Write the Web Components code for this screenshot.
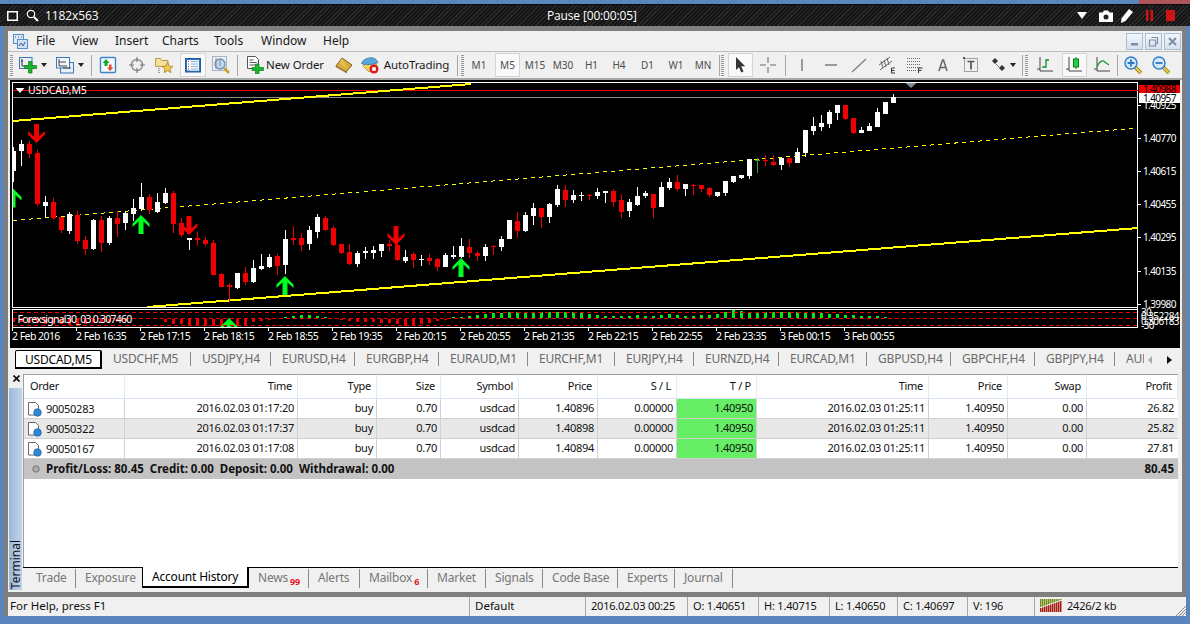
<!DOCTYPE html>
<html>
<head>
<meta charset="utf-8">
<title>MetaTrader</title>
<style>
  html, body { margin: 0; padding: 0; width: 1190px; height: 624px; overflow: hidden; background: #5a86bd; }
  body { font-family: "Noto Sans", "Liberation Sans", sans-serif; }
</style>
</head>
<body>
<mt-app></mt-app>
<script>
// toolbar and menu icons, all drawn on an 18px box
const ICON = {
  newChart: `<svg width="18" height="18" viewBox="0 0 18 18"><rect x=".5" y="1.5" width="12.500" height="11" fill="#e8f0fa" stroke="#3f74b5"/><path d="M3 3v7h7M2 5h2M8 9v2" stroke="#333" fill="none"/><path d="M5.500 9.500h4v-4h3.500v4h4.500v3H13v4.500H9.500v-4.500h-4z" fill="#19b52d" stroke="#0d7a1c" stroke-width=".7"/></svg>`,
  profiles: `<svg width="18" height="18" viewBox="0 0 18 18"><rect x="4.5" y="6.5" width="13" height="10.5" fill="#e8f0fa" stroke="#3f74b5"/><rect x=".5" y="1.5" width="13" height="10.5" fill="#f1f6fc" stroke="#3f74b5"/><path d="M3 3v7h8M3 6h7M7 12h8" stroke="#444" fill="none"/></svg>`,
  market: `<svg width="18" height="18" viewBox="0 0 18 18"><rect x="1.5" y="1.5" width="15" height="15" rx="1" fill="#f6faff" stroke="#3f84c5" stroke-width="1.4"/><path d="M7 3l3.5 4H8.5v3h-3V7H3.500z" fill="#14a82a"/><path d="M11 15l-3-3.500h2V8.500h2.500v3h2z" fill="#e2502a"/></svg>`,
  nav: `<svg width="18" height="18" viewBox="0 0 18 18"><circle cx="9" cy="9" r="5.500" fill="none" stroke="#8a8a8a" stroke-width="1.400"/><path d="M9 1v5M9 12v5M1 9h5M12 9h5" stroke="#777" stroke-width="1.100"/></svg>`,
  folder: `<svg width="18" height="18" viewBox="0 0 18 18"><path d="M.5 2.500h5l1.500 2h6v6H.5z" fill="#f6df9a" stroke="#b89a4b"/><path d="M4 12v5M2 14h.1" stroke="#555" stroke-dasharray="1 1"/><path d="M12.500 6.500l1.700 3.500 3.600.5-2.600 2.500.7 3.600-3.400-1.800-3.300 1.800.7-3.600-2.700-2.500 3.700-.5z" fill="#eec84f" stroke="#a6852c" stroke-width=".8"/></svg>`,
  terminal: `<svg width="18" height="18" viewBox="0 0 18 18"><rect x="1.500" y="2.500" width="15" height="13.500" fill="#2f73bb" stroke="#235d9d"/><rect x="3" y="4" width="12" height="10.500" fill="#fff"/><rect x="6" y="4" width="9" height="10.500" fill="#eaf2fb"/><path d="M4 5.500h1M4 8h1M4 10.500h1M4 13h1" stroke="#b33"/><path d="M7 5.500h7M7 8h7M7 10.500h7M7 13h7" stroke="#9bbbdd"/></svg>`,
  tester: `<svg width="18" height="18" viewBox="0 0 18 18"><rect x=".5" y=".5" width="14" height="14" fill="#eef2f6" stroke="#aab4bf"/><circle cx="8" cy="8" r="5" fill="#bcd8f2" stroke="#6d8fb2" stroke-width="1.300"/><path d="M4 2v11M8 4v6" stroke="#888"/><path d="M12 12l5 5" stroke="#c9a030" stroke-width="2.500"/></svg>`,
  order: `<svg width="18" height="18" viewBox="0 0 18 18"><path d="M1.500.5h8l3 3v9h-11z" fill="#fff" stroke="#555"/><path d="M3.500 4h4M3.500 6.500h7M3.500 9h7" stroke="#555"/><path d="M6 11.500h3.500V8h3.500v3.500h4.500v3H13V18H9.500v-3.500H6z" fill="#19b52d" stroke="#0d7a1c" stroke-width=".7"/></svg>`,
  book: `<svg width="18" height="18" viewBox="0 0 18 18"><path d="M7 2l10 7-6 7-10-6z" fill="#d9ad3c" stroke="#7d5a16"/><path d="M1 10l10 6 .8 1L1 11z" fill="#f7edc9" stroke="#7d5a16" stroke-width=".6"/><path d="M7 2L4 7l9 6" fill="#ecc862" opacity=".6"/></svg>`,
  auto: `<svg width="18" height="18" viewBox="0 0 18 18"><path d="M2 10l6 6 8-5-1-4H3z" fill="#f2d15f" stroke="#a78a2b" stroke-width=".7"/><path d="M.5 7.500C2 2 12 0 15 3.500l2 3c-3 2-12 3-16.500 1z" fill="#5aa6db" stroke="#2c6d9f" stroke-width=".7"/><circle cx="13" cy="13" r="4.500" fill="#d91c1c"/><rect x="11.200" y="11.200" width="3.600" height="3.600" fill="#fff"/></svg>`,
  cursor: `<svg width="18" height="18" viewBox="0 0 18 18"><path d="M5 1v13l3-2.700 2.300 5.200 2.200-1-2.300-5.200h4z" fill="#333"/></svg>`,
  cross: `<svg width="18" height="18" viewBox="0 0 18 18"><path d="M1 9h6M11 9h6M9 1v6M9 11v6" stroke="#666"/></svg>`,
  vline: `<svg width="18" height="18" viewBox="0 0 18 18"><path d="M9 3v12" stroke="#555" stroke-width="1.100"/></svg>`,
  hline: `<svg width="18" height="18" viewBox="0 0 18 18"><path d="M3 9h12" stroke="#555" stroke-width="1.100"/></svg>`,
  tline: `<svg width="18" height="18" viewBox="0 0 18 18"><path d="M2 16L16 3" stroke="#777" stroke-width="1.100"/></svg>`,
  chan: `<svg width="18" height="18" viewBox="0 0 18 18"><path d="M1 9L12 1M2 14L14 5M3 5l2 7M6 4l2 7M9 2l2 7" stroke="#666" fill="none"/><path d="M13.500 17v-5h3.500M13.500 14.500h3M13.500 17h3.500" stroke="#333" fill="none"/></svg>`,
  fibo: `<svg width="18" height="18" viewBox="0 0 18 18"><path d="M1 2.500h14M1 5.500h14M1 8.500h14M1 11.500h14M1 14.500h9" stroke="#666" stroke-dasharray="1 1"/><path d="M12.500 17v-5h4M12.500 14.500h3" stroke="#333" fill="none"/></svg>`,
  letter: `<svg width="18" height="18" viewBox="0 0 18 18"><path d="M5 15L8.500 4h1L13 15M6.500 11.500h5" stroke="#666" stroke-width="1.500" fill="none"/></svg>`,
  label: `<svg width="18" height="18" viewBox="0 0 18 18"><rect x="2.500" y="2.500" width="13" height="13" fill="none" stroke="#555" stroke-dasharray="1 1"/><path d="M5.500 5.500h7M9 5.500v8" stroke="#555" stroke-width="1.700"/><rect x="1" y="1" width="2" height="2" fill="#555"/></svg>`,
  shapes: `<svg width="18" height="18" viewBox="0 0 18 18"><path d="M6 2l3 3-3 3-3-3z" fill="#333"/><path d="M13 9l3 3-3 3-3-3z" fill="#333"/><path d="M7 8l4 4" stroke="#777"/></svg>`,
  bars: `<svg width="18" height="18" viewBox="0 0 18 18"><path d="M4 1v14h13M1 13h3" stroke="#444" fill="none"/><path d="M7 12v-1h3V4h3" stroke="#0c8f22" stroke-width="1.300" fill="none"/></svg>`,
  candles: `<svg width="18" height="18" viewBox="0 0 18 18"><path d="M4 1v14h13M1 13h3" stroke="#444" fill="none"/><path d="M11 1v12" stroke="#0b7a1c"/><rect x="8.500" y="3" width="5" height="8" fill="#1fd43a" stroke="#0b7a1c"/></svg>`,
  line: `<svg width="18" height="18" viewBox="0 0 18 18"><path d="M4 1v14h13M1 13h3" stroke="#444" fill="none"/><path d="M4 11c3-7 6-7 8-5l4 3" stroke="#1a9a30" stroke-width="1.200" fill="none"/></svg>`,
  zoomIn: `<svg width="18" height="18" viewBox="0 0 18 18"><path d="M11 11l6 6" stroke="#8a6a10" stroke-width="3.600"/><path d="M11 11l6 6" stroke="#f0d04a" stroke-width="2"/><circle cx="7" cy="7" r="6" fill="#d6e8f8" stroke="#3380c8" stroke-width="1.500"/><path d="M3.500 7h7M7 3.500v7" stroke="#2a78c0" stroke-width="1.800"/></svg>`,
  zoomOut: `<svg width="18" height="18" viewBox="0 0 18 18"><path d="M11 11l6 6" stroke="#8a6a10" stroke-width="3.600"/><path d="M11 11l6 6" stroke="#f0d04a" stroke-width="2"/><circle cx="7" cy="7" r="6" fill="#d6e8f8" stroke="#3380c8" stroke-width="1.500"/><path d="M3.500 7h7" stroke="#2a78c0" stroke-width="1.800"/></svg>`
};

// base class: every element just stamps a style + markup into an open shadow root
class MtElement extends HTMLElement {
  constructor() {
    super();
    this.attachShadow({ mode: 'open' });
  }
  connectedCallback() {
    this.shadowRoot.innerHTML = `<style>${this.css()}</style>${this.html()}`;
  }
}

class MtTitlebar extends MtElement {
  css() {
    return `
      :host { display: flex; align-items: center; height: 22px; color: #fff; font: 12px "Open Sans", sans-serif; position: relative;
        background: repeating-linear-gradient(135deg, #2b2b2b 0 1px, #151515 1px 3px); border-top: 1px solid #0a0a0a; box-sizing: border-box; }
      .left { display: flex; align-items: center; margin-left: 7px; }
      .size { margin-left: 6px; letter-spacing: -.1px; }
      .mid { position: absolute; left: 547px; top: 2px; letter-spacing: -.15px; }
      .right { margin-left: auto; display: flex; align-items: center; }
      svg { display: block; }
    `;
  }
  html() {
    return `
      <div class="left">
        <svg width="11" height="10" viewBox="0 0 11 10" style="margin-right:8px"><rect x=".75" y=".75" width="9.500" height="8.500" fill="none" stroke="#fff" stroke-width="1.500"/></svg>
        <svg width="13" height="13" viewBox="0 0 13 13"><circle cx="5" cy="5" r="3.700" fill="none" stroke="#fff" stroke-width="1.200"/><path d="M8 8l4 4" stroke="#fff" stroke-width="2"/></svg>
        <span class="size">1182x563</span>
      </div>
      <span class="mid">Pause [00:00:05]</span>
      <div class="right">
        <svg width="10" height="7" viewBox="0 0 10 7" style="margin-right:12px"><path d="M0 0h10L5 7z" fill="#fff"/></svg>
        <svg width="14" height="12" viewBox="0 0 14 12" style="margin-right:7px"><path d="M0 2.500h3.500L5 .5h4l1.500 2H14V12H0z" fill="#fff"/><circle cx="7" cy="7" r="2.500" fill="#222"/></svg>
        <svg width="13" height="14" viewBox="0 0 13 14" style="margin-right:13px"><path d="M9 0l4 3-7.500 9L1 14l.5-4.500z" fill="#fff"/></svg>
        <svg width="7" height="11" viewBox="0 0 7 11" style="margin-right:13px"><path d="M0 0h2.500v11H0zM4.500 0H7v11H4.500z" fill="#d01414"/></svg>
        <svg width="9" height="11" viewBox="0 0 9 11" style="margin-right:15px"><rect width="9" height="11" fill="#d01414"/></svg>
      </div>`;
  }
}

class MtMenubar extends MtElement {
  css() {
    return `
      :host { display: flex; align-items: center; height: 20px; font: 12px "Noto Sans", sans-serif; color: #1a1a1a; border-bottom: 1px solid #bdbdbd; }
      svg { margin: 0 8px 0 5px; flex: none; }
      span { display: block; white-space: nowrap; padding-bottom: 1px; }
      .mdi { margin-left: auto; display: flex; gap: 2px; margin-right: 1px; }
      .mdi b { width: 15px; height: 15px; border: 1px solid #a9bcd0; background: linear-gradient(#f2f7fc, #d3e1ef); color: #7b8ea3; display: flex; align-items: center; justify-content: center; }
      .mdi svg { margin: 0; }
    `;
  }
  html() {
    const items = [['File', 36], ['View', 43], ['Insert', 47], ['Charts', 52], ['Tools', 47], ['Window', 62], ['Help', 40]];
    return `
      <svg width="15" height="15" viewBox="0 0 15 15"><rect x=".5" y=".5" width="10" height="9" fill="#dce9f7" stroke="#5a8cc4"/><rect x="4.500" y="5.500" width="10" height="9" fill="#cfe0f3" stroke="#5a8cc4"/><path d="M6 12l2-3 2 3 2-4" stroke="#355f92" fill="none"/><path d="M2 3h1M5 3h1M8 3h1" stroke="#355f92"/></svg>
      ${items.map(([t, w]) => `<span style="width:${w}px">${t}</span>`).join('')}
      <div class="mdi">
        <b><svg width="9" height="9" viewBox="0 0 9 9"><rect x="1" y="6" width="7" height="2.500" fill="#7b8ea3"/></svg></b>
        <b><svg width="11" height="11" viewBox="0 0 11 11"><path d="M3.500 1.500h6v6h-2M1.500 4h6v6h-6z" fill="none" stroke="#7b8ea3" stroke-width="1.200"/></svg></b>
        <b><svg width="9" height="9" viewBox="0 0 9 9"><path d="M1 1l7 7M8 1L1 8" stroke="#7b8ea3" stroke-width="2"/></svg></b>
      </div>`;
  }
}

class MtToolbar extends MtElement {
  css() {
    return `
      :host { display: flex; align-items: center; height: 28px; border-bottom: 2px solid #a8a8a8; box-sizing: border-box; font: 11.500px "Noto Sans", sans-serif; letter-spacing: -.1px; color: #1a1a1a; }
      .i { flex: none; display: flex; align-items: center; justify-content: center; white-space: nowrap; }
      .txt { padding-bottom: 2px; }
      .grip { height: 21px; background: repeating-linear-gradient(#9a9a9a 0 1px, transparent 1px 2px); }
      .sep { height: 21px; background: #a6a6a6; }
      .on { height: 24px; box-sizing: border-box; border: 1px solid #d4d4d4; background: repeating-conic-gradient(#fff 0 25%, #f3f3f3 0 50%) 0 0 / 2px 2px; }
      .tf { color: #4d4d4d; font-size: 10px; letter-spacing: 0; }
      .arrow { width: 0; height: 0; border: 3px solid transparent; border-top: 4px solid #222; border-bottom: 0; }
    `;
  }
  html() {
    // center x on the page, width, content
    const I = ICON;
    const list = [
      [11.5, 3, 'grip'], [27.5, 18, I.newChart], [44, 6, 'arrow'], [65, 18, I.profiles], [80.5, 6, 'arrow'], [91.5, 1, 'sep'],
      [108, 18, I.market], [136.5, 18, I.nav], [164, 18, I.folder], [193, 26, I.terminal, 1], [221, 18, I.tester], [237.5, 1, 'sep'],
      [255, 18, I.order], [295, 58, 'New Order'], [343.5, 18, I.book], [370, 18, I.auto], [416.5, 68, 'AutoTrading'], [457.5, 1, 'sep'], [462.5, 3, 'grip'],
      [479, 20, 'M1', 0, 1], [507.5, 25, 'M5', 1, 1], [535, 24, 'M15', 0, 1], [563, 24, 'M30', 0, 1], [591.5, 20, 'H1', 0, 1], [619, 20, 'H4', 0, 1], [647.5, 20, 'D1', 0, 1], [676, 20, 'W1', 0, 1], [703, 22, 'MN', 0, 1],
      [719, 1, 'sep'], [722.5, 3, 'grip'],
      [740, 25, I.cursor, 1], [768, 18, I.cross], [785.5, 1, 'sep'], [802, 18, I.vline], [830.5, 18, I.hline], [858.5, 18, I.tline], [887, 18, I.chan], [915, 18, I.fibo], [943, 18, I.letter], [971, 18, I.label], [998, 18, I.shapes], [1013, 6, 'arrow'],
      [1022.5, 1, 'sep'], [1026.5, 3, 'grip'], [1045, 18, I.bars], [1074, 25, I.candles, 1], [1102, 18, I.line], [1117.5, 1, 'sep'], [1133, 18, I.zoomIn], [1161, 18, I.zoomOut]
    ];
    let end = 8;
    return list.map(([c, w, what, on, tf]) => {
      const ml = c - w / 2 - end;
      end = c + w / 2;
      const plain = what === 'New Order' || what === 'AutoTrading';
      const cls = ['i', on ? 'on' : '', tf ? 'tf' : '', plain ? 'txt' : '', what === 'grip' || what === 'sep' ? what : ''].join(' ');
      const body = what === 'grip' || what === 'sep' ? '' : what === 'arrow' ? '<span class="arrow"></span>' : what;
      return `<div class="${cls}" style="width:${w}px;margin-left:${ml}px">${body}</div>`;
    }).join('');
  }
}

// candles are read off the reference: colour, wick top, body top, body bottom, wick bottom
// values are 3x offsets from y=110
const CANDLES = `W 112 124 183 215|W 90 102 122 168|R 94 102 132 143|R 120 129 282 287|W 258 276 288 323|R 264 276 323 330|R 320 320 359 368|W 306 312 363 372|R 303 315 392 401|R 378 390 417 435|W 327 330 417 420|R 318 330 399 426|W 318 324 399 405|R 303 324 342 381|W 303 309 339 360|W 267 294 312 333|W 219 261 297 303|R 252 261 300 312|W 249 276 306 309|W 234 249 279 282|R 243 249 342 369|R 324 339 375 381|W 384 384 391 420|R 366 384 389 408|R 381 390 402 408|R 390 399 495 495|R 489 492 531 531|R 519 525 530 575|W 489 489 534 537|R 471 489 516 525|W 450 474 516 519|W 432 468 477 480|W 432 441 471 474|R 432 438 468 495|W 360 387 465 492|R 348 384 389 405|R 369 384 405 423|W 348 360 402 420|W 312 321 366 384|R 318 324 360 363|R 348 354 405 408|R 402 402 429 432|R 402 426 462 465|W 423 429 462 471|W 411 423 428 447|W 408 420 429 447|W 402 402 423 441|R 390 402 407 423|R 348 405 450 453|W 420 441 453 459|R 426 432 450 474|W 435 447 450 468|R 432 444 453 465|R 444 447 471 483|W 429 435 471 471|W 408 435 441 447|W 384 408 441 444|R 387 411 429 444|R 423 429 438 453|W 402 411 438 453|R 405 408 411 435|W 378 387 411 423|W 330 330 387 387|R 306 333 363 384|W 306 315 363 366|W 279 294 318 345|R 294 294 321 354|W 279 282 321 339|W 225 237 285 291|R 225 240 270 291|W 240 255 270 279|W 246 255 258 273|R 252 255 258 270|W 234 246 258 267|W 243 243 248 279|R 237 243 276 291|R 252 270 306 324|W 267 276 303 321|W 231 258 285 288|W 243 249 258 264|R 252 252 294 324|W 216 231 291 291|W 204 216 234 240|R 195 216 237 243|W 222 222 237 258|R 222 225 228 255|R 225 225 237 246|R 231 234 255 261|W 246 246 258 261|W 213 213 249 258|W 198 198 216 219|W 195 195 204 207|W 147 147 198 207|G 144 150 153 189|R 135 150 153 168|R 135 156 165 168|W 141 144 165 180|R 144 144 159 171|W 114 126 159 159|W 60 60 130 142|W 21 48 63 75|W 15 39 51 63|W 0 6 42 54|W -15 -15 9 30|R -15 -15 27 30|R 24 24 69 72|W 51 60 69 69|W 39 48 63 63|W -6 6 51 51|W -24 -24 12 12|W -48 -39 -21 -21`
  .split('|').map(s => s.split(' '));

// oscillator in the sub window, one value per candle, + is green up, - is red down
const OSC = [-3,-3,-4,-4,-5,-5,-5,-6,-6,-5,-4,-4,-3,-3,-2,.5,.5,.5,.5,-3,-5,-5,-6,-7,-7,-7,-7,-7,-7,-6,-3,-2,-1,.5,1,2,3,3,2,1,.5,-1,-2,-3,-3,-3,-4,-4,-5,-7,-6,-5,-4,-2,-.5,1,1,2,3,4,5,5,6,6,6,6,6,6,6,6,6,5,4,3,2,2,2,2,3,2,2,3,4,3,2,2,3,3,4,6,8,7,6,6,6,6,6,6,6,6,6,5,4,4,3,3,2,2,2,1,.5];

class MtChart extends MtElement {
  css() {
    return `
      :host { display: block; height: 268px; margin: 0 2px; background: #000; }
      svg { display: block; font: 10.500px "Noto Sans", sans-serif; }
      text { fill: #fff; }
      .c { shape-rendering: crispEdges; }
      .d { letter-spacing: -.55px; }
      .p { font-size: 10px; letter-spacing: -.6px; }
    `;
  }
  html() {
    const y = v => Math.round(110 + v / 3);
    const col = { W: '#fff', R: '#f00000', G: '#3aa03a' };
    const candles = CANDLES.map(([c, wt, bt, bb, wb], i) => {
      const x = 13 + 8 * i;
      const h = Math.max(1, y(+bb) - y(+bt));
      return `<rect x="${x}" y="${y(+wt)}" width="1" height="${Math.max(1, y(+wb) - y(+wt))}" fill="${col[c]}"/>` +
        `<rect x="${x - 2}" y="${y(+bt)}" width="5" height="${h}" fill="${col[c]}"/>`;
    }).join('');
    const osc = OSC.map((v, i) => {
      const x = 12 + 8 * i, h = Math.abs(v);
      if (v > 0) return `<rect x="${x}" y="${318 - h}" width="3" height="${h}" fill="#00e81c"/>`;
      return `<rect x="${x}" y="319" width="3" height="${h}" fill="#f00000"/>`;
    }).join('');
    const up = (x, t, col) => `<path transform="translate(${x} ${t})" d="M0 0L8.500 8.500V12L2.500 6.500V19H-2.500V6.500L-8.500 12V8.500z" fill="${col}"/>`;
    const down = (x, t) => `<path transform="translate(${x} ${t}) scale(1 -1)" d="M0 0L8.500 8.500V12L2.500 6.500V19H-2.500V6.500L-8.500 12V8.500z" fill="#f00000"/>`;
    const prices = [['1.40925', 105], ['1.40770', 138], ['1.40615', 171], ['1.40455', 204], ['1.40295', 237], ['1.40135', 271], ['1.39980', 304]];
    const dates = ['2 Feb 2016', '2 Feb 16:35', '2 Feb 17:15', '2 Feb 18:15', '2 Feb 18:55', '2 Feb 19:35', '2 Feb 20:15', '2 Feb 20:55', '2 Feb 21:35', '2 Feb 22:15', '2 Feb 22:55', '2 Feb 23:35', '3 Feb 00:15', '3 Feb 00:55'];
    return `
    <svg width="1170" height="268" viewBox="10 80 1170 268">
      <defs>
        <clipPath id="main"><rect x="13" y="83" width="1125" height="224"/></clipPath>
        <clipPath id="sub"><rect x="13" y="310" width="1125" height="17"/></clipPath>
      </defs>
      <g class="c" fill="none" stroke="#fff">
        <rect x="12.500" y="82.500" width="1125" height="225"/>
        <rect x="12.500" y="309.500" width="1125" height="18"/>
        <path d="M1137.500 82v245"/>
      </g>
      <g clip-path="url(#main)">
        <path class="c" d="M13 97.500H1138" stroke="#8a8a8a"/>
        <path class="c" d="M13 90.500H1138" stroke="#f00000"/>
        <path d="M15.500 88h9l-4.500 5z" fill="#fff"/>
        <text x="28" y="94" style="letter-spacing:-.15px">USDCAD,M5</text>
        <path class="c" d="M13 121L471 84" stroke="#ffff00" stroke-width="2"/>
        <path class="c" d="M147 307L1138 228" stroke="#ffff00" stroke-width="2"/>
        <path class="c" d="M13 220.500L1138 128" stroke="#ffff00" stroke-dasharray="4 4"/>
        <g class="c">${candles}</g>
        ${up(13, 188.5, '#00ff1e')}${up(141, 215, '#00ff1e')}${up(285, 276, '#00ff1e')}${up(461, 258, '#00ff1e')}
        ${down(36.5, 143)}${down(189, 235)}${down(396, 245)}
        <path d="M905.500 83h11l-5.500 5z" fill="#7f8c99"/>
      </g>
      <g clip-path="url(#sub)">
        <g class="c">${osc}</g>
        ${up(229, 318, '#00ff1e')}
        <g class="c" stroke="#f00000" stroke-dasharray="4 3">
          <path d="M13 312.500H1138M13 318.500H1138M13 325.500H1138"/>
        </g>
        <text x="17.500" y="323" style="letter-spacing:-.75px">Forexsignal30_03 0.307460</text>
      </g>
      <rect x="1139" y="85" width="41" height="8" fill="#f00000"/>
      <text class="p" x="1143" y="93" style="fill:#000">1.40988</text>
      ${prices.map(([t, py]) => `<path class="c" d="M1138 ${py + .5}h3" stroke="#fff"/><text class="p" x="1143" y="${py + 4}">${t}</text>`).join('')}
      <rect x="1139" y="93" width="41" height="10" fill="#fff"/>
      <text class="p" x="1143" y="102" style="fill:#000">1.40957</text>
      <g>
        <text class="p" x="1141" y="315.500">30</text>
        <text class="p" x="1141" y="320">0.352284</text>
        <text class="p" x="1141" y="324.500">0.306183</text>
        <text class="p" x="1141" y="329">-30</text>
      </g>
      ${dates.map((d, i) => {
        const x = 12 + 64 * i;
        return `<path class="c" d="M${x + .5} 327v4" stroke="#fff"/><text class="d" x="${x}" y="340">${d}</text>`;
      }).join('')}
    </svg>`;
  }
}

class MtChartTabs extends MtElement {
  css() {
    return `
      :host { display: flex; height: 19px; margin-top: 2px; font: 12px "Noto Sans", sans-serif; letter-spacing: -.2px; color: #6a6a6a; position: relative; }
      .strip { display: flex; margin-left: 7px; width: 1129px; overflow: hidden; flex: none; }
      .t { flex: none; box-sizing: border-box; white-space: nowrap; padding-left: 11px; line-height: 18px; position: relative; }
      .t::after { content: ""; position: absolute; right: 0; top: 2px; height: 14px; width: 1px; background: #888; }
      .t:last-child::after { display: none; }
      .on { padding-left: 9px; color: #000; border: 1px solid #000; border-bottom-width: 2px; border-right-width: 2px; border-radius: 2px 2px 0 0; background: #fff; height: 19px; line-height: 17px; }
      .on::after { display: none; }
      .arr { display: flex; align-items: center; margin-left: 4px; }
      .l { border: 4px solid transparent; border-left: 0; border-right: 4px solid #aaa; }
      .r { border: 4px solid transparent; border-right: 0; border-left: 5px solid #111; margin-left: 15px; }
    `;
  }
  html() {
    const tabs = [['USDCHF,M5', 190], ['USDJPY,H4', 270], ['EURUSD,H4', 354], ['EURGBP,H4', 438], ['EURAUD,M1', 527], ['EURCHF,M1', 614], ['EURJPY,H4', 693], ['EURNZD,H4', 778], ['EURCAD,M1', 866], ['GBPUSD,H4', 950], ['GBPCHF,H4', 1034], ['GBPJPY,H4', 1114], ['AUDCAD,H4', 1200]];
    let end = 102;
    return `<div class="strip"><div class="t on" style="width:87px">USDCAD,M5</div>
      ${tabs.map(([t, r]) => { const w = r + 1 - end; end = r + 1; return `<div class="t" style="width:${w}px">${t}</div>`; }).join('')}
      </div><div class="arr"><span class="l"></span><span class="r"></span></div>`;
  }
}

class MtTable extends MtElement {
  css() {
    return `
      :host { display: block; flex: 1; background: #fff; font: 11px "Noto Sans", sans-serif; letter-spacing: -.27px; color: #111; border-top: 1px solid #a0a0a0; border-left: 1px solid #a0a0a0; }
      .r { display: grid; grid-template-columns: 101px 173px 79px 64px 78px 79px 79px 80px 172px 79px 79px 91px; height: 20px; box-sizing: border-box; border-bottom: 1px solid #cfcfcf; }
      .r > div { text-align: right; padding-right: 3px; line-height: 18px; border-right: 1px solid #d2d2d2; white-space: nowrap; overflow: hidden; }
      .r > div:last-child { border-right: 0; padding-right: 4px; }
      .h { height: 24px; border-bottom: 1px solid #d7e3ef; }
      .r.h > div { line-height: 22px; padding-right: 5px; border-right: 1px solid #e3edf7; }
      .r.h > div:first-child { text-align: left; padding-left: 6px; }
      .alt { background: #e8e8e8; }
      .r > .ord { display: flex; align-items: center; justify-content: flex-start; padding-left: 3px; }
      .ord svg { margin-right: 4px; flex: none; }
      .tp { background: #66ee66; }
      .sum { display: flex; height: 20px; background: #c3c3c3; font-size: 11.500px; letter-spacing: 0; font-weight: 700; align-items: center; padding: 0 4px 1px 8px; box-sizing: border-box; }
      .sum svg { margin-right: 6px; }
      .sum span:last-child { margin-left: auto; }
    `;
  }
  html() {
    const doc = `<svg width="15" height="16" viewBox="0 0 15 16"><path d="M1.500 1.500h7l3 3v9.500h-10z" fill="#fff" stroke="#666"/><circle cx="10.500" cy="11.500" r="3.800" fill="#2f86d6" stroke="#1a5f9f" stroke-width=".7"/></svg>`;
    const head = ['Order', 'Time', 'Type', 'Size', 'Symbol', 'Price', 'S / L', 'T / P', 'Time', 'Price', 'Swap', 'Profit'];
    const rows = [
      ['90050283', '2016.02.03 01:17:20', 'buy', '0.70', 'usdcad', '1.40896', '0.00000', '1.40950', '2016.02.03 01:25:11', '1.40950', '0.00', '26.82'],
      ['90050322', '2016.02.03 01:17:37', 'buy', '0.70', 'usdcad', '1.40898', '0.00000', '1.40950', '2016.02.03 01:25:11', '1.40950', '0.00', '25.82'],
      ['90050167', '2016.02.03 01:17:08', 'buy', '0.70', 'usdcad', '1.40894', '0.00000', '1.40950', '2016.02.03 01:25:11', '1.40950', '0.00', '27.81']
    ];
    return `
      <div class="r h">${head.map(h => `<div>${h}</div>`).join('')}</div>
      ${rows.map((r, n) => `<div class="r ${n === 1 ? 'alt' : ''}">${r.map((c, i) =>
        i === 0 ? `<div class="ord">${doc}${c}</div>` : `<div class="${i === 7 ? 'tp' : ''}">${c}</div>`).join('')}</div>`).join('')}
      <div class="sum">
        <svg width="8" height="8" viewBox="0 0 8 8"><circle cx="4" cy="4" r="3.200" fill="#aaa" stroke="#777"/></svg>
        <span>Profit/Loss: 80.45&nbsp; Credit: 0.00&nbsp; Deposit: 0.00&nbsp; Withdrawal: 0.00</span>
        <span>80.45</span>
      </div>`;
  }
}

class MtTerminal extends MtElement {
  css() {
    return `
      :host { display: grid; grid-template-columns: 15px 1fr; height: 223px; padding-right: 4px; font: 12px "Noto Sans", sans-serif; }
      .side { display: flex; flex-direction: column; padding-left: 1px; }
      .x { height: 19px; display: flex; align-items: center; justify-content: center; box-sizing: border-box; }
      .bar { flex: 1; margin: 0 1px 2px 0; background: linear-gradient(90deg, #9db9d9, #c0d4ea); display: flex; align-items: flex-end; justify-content: center; }
      .bar span { writing-mode: vertical-rl; transform: rotate(180deg); line-height: 13px; padding-top: 1px; color: #111; }
      .main { display: flex; flex-direction: column; padding-top: 5px; min-width: 0; }
      .tabs { display: flex; height: 25px; flex: none; box-sizing: border-box; border-top: 1px solid #000; color: #777; letter-spacing: -.2px; }
      .t { flex: none; box-sizing: border-box; line-height: 17px; height: 19px; margin-top: 1px; border-right: 1px solid #888; white-space: nowrap; padding-left: 9px; }
      .t.on { height: 21px; margin-top: -1px; padding-top: 1px; color: #000; background: #fff; border: 1px solid #000; border-top: 0; border-bottom-width: 2px; border-right-width: 2px; margin-left: 0; }
      .t.bare { border-right-color: transparent; }
      sub { font-size: 9px; color: #e8121e; font-weight: 700; vertical-align: -3px; margin-left: 2px; line-height: 0; }
    `;
  }
  html() {
    // [label, right edge on the page]
    const tabs = [['Trade', 77], ['Exposure', 143, 'bare'], ['Account History', 250, 'on'], ['News<sub>99</sub>', 310], ['Alerts', 361], ['Mailbox<sub>6</sub>', 429], ['Market', 487], ['Signals', 544], ['Code Base', 619], ['Experts', 676], ['Journal', 734]];
    let end = 24;
    return `
      <div class="side">
        <div class="x"><svg width="7" height="7" viewBox="0 0 7 7"><path d="M.5.500l6 6M6.500.500l-6 6" stroke="#111" stroke-width="1.700"/></svg></div>
        <div class="bar"><span>Terminal</span></div>
      </div>
      <div class="main">
        <mt-table></mt-table>
        <div class="tabs">${tabs.map(([t, r, c]) => {
          const w = r - end; const pad = end === 24 ? 13 : 9; end = r;
          return `<div class="t ${c || ''}" style="width:${w}px;padding-left:${pad}px">${t}</div>`;
        }).join('')}</div>
      </div>`;
  }
}

class MtStatusbar extends MtElement {
  css() {
    return `
      :host { display: flex; height: 19px; background: #f0f0f0; font: 11px "Noto Sans", sans-serif; letter-spacing: -.2px; color: #111; position: relative; }
      div { flex: none; box-sizing: border-box; border-right: 1px solid #a8a8a8; padding: 0 0 2px 5px; white-space: nowrap; display: flex; align-items: center; }
      div:first-of-type { padding-left: 2px; }
      div:last-of-type { border-right: 0; }
      .w { font-size: 11.500px; letter-spacing: 0; }
      svg { display: block; }
      .grip { position: absolute; right: 0; bottom: 0; }
    `;
  }
  html() {
    const cells = [['For Help, press F1', 470, 'w'], ['Default', 586, 'w'], ['2016.02.03 00:25', 688], ['O: 1.40651', 759], ['H: 1.40715', 830], ['L: 1.40650', 898], ['C: 1.40697', 968], ['V: 196', 1035]];
    let end = 8;
    const bars = Array.from({ length: 11 }, (_, i) => {
      const h = 4 + i * .7;
      return `<rect x="${i * 2}" y="0" width="1.500" height="${13 - h - 1}" fill="#6f8f14"/><rect x="${i * 2}" y="${13 - h}" width="1.500" height="${h}" fill="#a31d10"/>`;
    }).join('');
    return `${cells.map(([t, r, c]) => { const w = r - end; end = r; return `<div class="${c || ''}" style="width:${w}px">${t}</div>`; }).join('')}
      <div><svg width="23" height="13" viewBox="0 0 23 13" style="margin-right:4px">${bars}</svg>2426/2 kb</div>
      <svg class="grip" width="11" height="11" viewBox="0 0 11 11"><path d="M11 1L1 11M11 4L4 11M11 7l-4 4" stroke="#8a8a8a"/></svg>`;
  }
}

class MtApp extends MtElement {
  css() {
    return `
      :host { display: block; width: 1190px; height: 624px; }
      .top { height: 4px; background: linear-gradient(90deg, #5a86bd 1139px, #ad5558 1139px); }
      .frame { background: #7f7f7f; margin: 0 4px; height: 590px; display: flex; flex-direction: column; }
      .gap { height: 5px; flex: none; }
      .win { margin: 0 4px; background: #f0f0f0; height: 561px; flex: none; }
      .low { height: 5px; flex: none; }
      mt-statusbar { margin: 0 0 0 4px; }
    `;
  }
  html() {
    return `
      <div class="top"></div>
      <mt-titlebar></mt-titlebar>
      <div class="frame">
        <div class="gap"></div>
        <div class="win">
          <mt-menubar></mt-menubar>
          <mt-toolbar></mt-toolbar>
          <mt-chart></mt-chart>
          <mt-charttabs></mt-charttabs>
          <mt-terminal></mt-terminal>
        </div>
        <div class="low"></div>
        <mt-statusbar></mt-statusbar>
      </div>`;
  }
}

// children first, so nested elements are upgraded as soon as the app stamps them
customElements.define('mt-titlebar', MtTitlebar);
customElements.define('mt-menubar', MtMenubar);
customElements.define('mt-toolbar', MtToolbar);
customElements.define('mt-chart', MtChart);
customElements.define('mt-charttabs', MtChartTabs);
customElements.define('mt-table', MtTable);
customElements.define('mt-terminal', MtTerminal);
customElements.define('mt-statusbar', MtStatusbar);
customElements.define('mt-app', MtApp);
</script>
</body>
</html>
